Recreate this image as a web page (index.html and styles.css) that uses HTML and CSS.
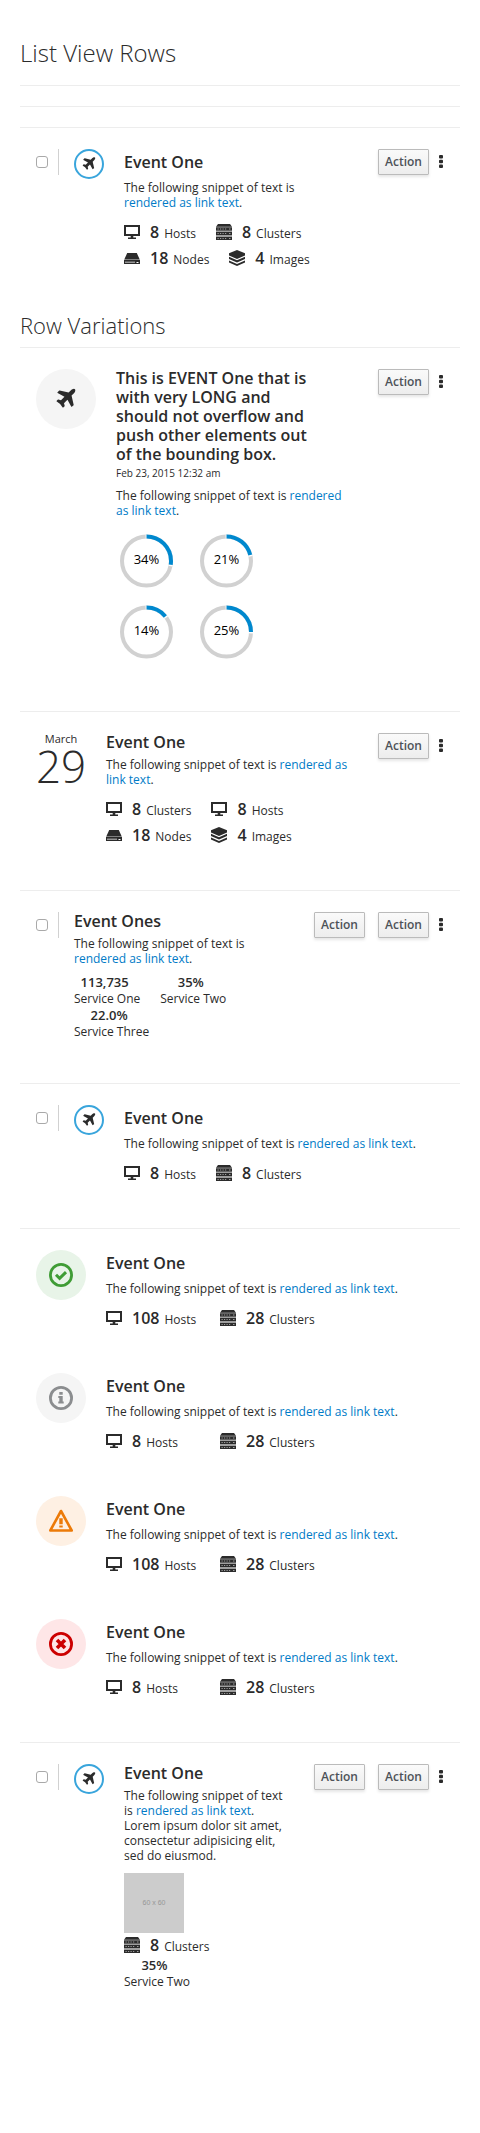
FILE: index.html
```
<!DOCTYPE html>
<html lang="en">
<head>
<meta charset="utf-8">
<title>List View Rows</title>
<link rel="stylesheet" href="styles.css">
</head>
<body>
<svg class="sprite" aria-hidden="true">
  <symbol id="plane" viewBox="0 0 1792 1792"><path d="M1568 160q44 52 12 148t-108 172l-161 161 160 696q5 19-12 33l-128 96q-7 6-19 6-4 0-7-1-15-3-21-16l-279-508-259 259 53 194q5 17-8 31l-96 96q-9 9-23 9h-2q-15-2-24-13l-189-252-252-189q-11-7-13-23-1-13 9-25l96-97q9-9 23-9 6 0 8 1l194 53 259-259-508-279q-14-8-17-24-2-16 9-27l128-128q14-13 30-8l665 159 160-160q76-76 172-108t148 12z"/></symbol>
  <symbol id="screen" viewBox="0 0 16 16"><path fill-rule="evenodd" d="M0 1h16v11H0zM2 3v7h12V3z"/><path d="M6.700 12h2.600v1.600H12V15H4v-1.400h2.700z"/></symbol>
  <symbol id="cluster" viewBox="0 0 16 16"><path d="M2 0h12l2 2.700H0z"/><path opacity=".45" d="M0 2.700h16V16H0z"/><path fill-rule="evenodd" d="M0 3.500h16v3H0zM1.500 4.500v1h1.200v-1zM4 4.500v1h1.200v-1zM6.500 4.500v1h1.200v-1zM9 4.500v1h1.200v-1zM13 4.500v1h1.500v-1zM0 8h16v3H0zM1.500 9v1h1.200V9zM4 9v1h1.200V9zM6.500 9v1h1.200V9zM9 9v1h1.200V9zM13 9v1h1.500V9zM0 13h16v3H0zM1.500 14v1h1.200v-1zM4 14v1h1.200v-1zM6.500 14v1h1.200v-1zM9 14v1h1.200v-1zM13 14v1h1.500v-1z"/></symbol>
  <symbol id="node" viewBox="0 0 16 16"><path d="M3.200 3h9.600L15.500 9H.5z"/><path fill-rule="evenodd" d="M0 10h16v4H0zM1.500 11.500v1.500h1v-1.500zM3.500 11.500v1.500h1v-1.500zM5.500 11.500v1.500h1v-1.500zM7.500 11.500v1.500h1v-1.500zM9.500 11.500v1.500h1v-1.500zM12.500 12v1h2v-1z"/><path opacity=".6" d="M.3 9h15.400v1H.3z"/></symbol>
  <symbol id="image" viewBox="0 0 16 16"><path d="M8 0l8 3.300v2.200L8 9 0 5.500V3.300z"/><path d="M0 6.700l8 3.500 8-3.500v2.200l-8 3.600-8-3.600zM0 10.400L8 14l8-3.600v2.200L8 16l-8-3.400z"/></symbol>
  <symbol id="ok" viewBox="0 0 24 24"><circle cx="12" cy="12" r="10.600" fill="none" stroke="currentColor" stroke-width="2.800"/><path d="M7 11.700l3.600 3.600 6.400-6.200" fill="none" stroke="currentColor" stroke-width="3"/></symbol>
  <symbol id="info" viewBox="0 0 24 24"><circle cx="12" cy="12" r="10.600" fill="none" stroke="currentColor" stroke-width="2.800"/><path d="M10.300 6h3.400v2.700h-3.400zM9.300 10h4.400v5.600h1V17.500H9.300v-1.900h1v-3.700h-1z"/></symbol>
  <symbol id="warning" viewBox="0 0 24 24"><path d="M12 2L22.700 21.500H1.300z" fill="none" stroke="currentColor" stroke-width="2.600" stroke-linejoin="round"/><path d="M10.300 9.300h3.400v6h-3.400zM10.300 16.600h3.400v2h-3.400z"/></symbol>
  <symbol id="error" viewBox="0 0 24 24"><circle cx="12" cy="12" r="10.600" fill="none" stroke="currentColor" stroke-width="2.800"/><path d="M8 8l8 8M16 8l-8 8" fill="none" stroke="currentColor" stroke-width="3.600"/></symbol>
  <symbol id="kebab" viewBox="0 0 4 13"><rect width="4" height="3.600" rx="1"/><rect y="4.700" width="4" height="3.600" rx="1"/><rect y="9.400" width="4" height="3.600" rx="1"/></symbol>
</svg>
<main class="page">
  <h1 class="heading">List View Rows</h1>
  <div class="row row-blank"></div>
  <div class="row row-blank"></div>

  <div class="row row-first">
    <div class="check"><span class="box"></span></div>
    <div class="ring"><svg><use href="#plane"/></svg></div>
    <div class="body roomy">
      <h3 class="title">Event One</h3>
      <p class="desc">The following snippet of text is <a>rendered as link text</a>.</p>
      <div class="facts">
        <div class="fact"><svg><use href="#screen"/></svg><strong>8</strong>Hosts</div>
        <div class="fact"><svg><use href="#cluster"/></svg><strong>8</strong>Clusters</div>
        <div class="fact"><svg><use href="#node"/></svg><strong>18</strong>Nodes</div>
        <div class="fact"><svg><use href="#image"/></svg><strong>4</strong>Images</div>
      </div>
    </div>
    <div class="actions"><button class="btn">Action</button><svg class="kebab"><use href="#kebab"/></svg></div>
  </div>

  <h2 class="subheading">Row Variations</h2>
  <div class="row row-long">
    <div class="disc disc-large"><svg><use href="#plane"/></svg></div>
    <div class="body">
      <h3 class="title">This is EVENT One that is with very LONG and should not overflow and push other elements out of the bounding box.</h3>
      <small class="stamp">Feb 23, 2015 12:32 am</small>
      <p class="desc">The following snippet of text is <a>rendered as link text</a>.</p>
      <div class="donuts">
        <svg class="donut" viewBox="0 0 60 60"><circle class="track" cx="30.500" cy="30" r="24.500"/><circle class="gap" pathLength="100" stroke-dasharray="29 71" cx="30.500" cy="30" r="24.500"/><circle class="arc" pathLength="100" stroke-dasharray="27.500 72.500" cx="30.500" cy="30" r="24.500"/><text x="30.500" y="33">34%</text></svg>
        <svg class="donut" viewBox="0 0 60 60"><circle class="track" cx="30.500" cy="30" r="24.500"/><circle class="gap" pathLength="100" stroke-dasharray="22.500 77.500" cx="30.500" cy="30" r="24.500"/><circle class="arc" pathLength="100" stroke-dasharray="21 79" cx="30.500" cy="30" r="24.500"/><text x="30.500" y="33">21%</text></svg>
        <svg class="donut" viewBox="0 0 60 60"><circle class="track" cx="30.500" cy="30" r="24.500"/><circle class="gap" pathLength="100" stroke-dasharray="15.500 84.500" cx="30.500" cy="30" r="24.500"/><circle class="arc" pathLength="100" stroke-dasharray="14 86" cx="30.500" cy="30" r="24.500"/><text x="30.500" y="33">14%</text></svg>
        <svg class="donut" viewBox="0 0 60 60"><circle class="track" cx="30.500" cy="30" r="24.500"/><circle class="gap" pathLength="100" stroke-dasharray="26.500 73.500" cx="30.500" cy="30" r="24.500"/><circle class="arc" pathLength="100" stroke-dasharray="25 75" cx="30.500" cy="30" r="24.500"/><text x="30.500" y="33">25%</text></svg>
      </div>
    </div>
    <div class="actions"><button class="btn">Action</button><svg class="kebab"><use href="#kebab"/></svg></div>
  </div>

  <div class="row row-date">
    <div class="date"><span class="month">March</span><span class="day">29</span></div>
    <div class="body">
      <h3 class="title">Event One</h3>
      <p class="desc">The following snippet of text is <a>rendered as link text</a>.</p>
      <div class="facts grid-facts">
        <div class="fact"><svg><use href="#screen"/></svg><strong>8</strong>Clusters</div>
        <div class="fact"><svg><use href="#screen"/></svg><strong>8</strong>Hosts</div>
        <div class="fact"><svg><use href="#node"/></svg><strong>18</strong>Nodes</div>
        <div class="fact"><svg><use href="#image"/></svg><strong>4</strong>Images</div>
      </div>
    </div>
    <div class="actions"><button class="btn">Action</button><svg class="kebab"><use href="#kebab"/></svg></div>
  </div>

  <div class="row row-services">
    <div class="check"><span class="box"></span></div>
    <div class="body">
      <h3 class="title">Event Ones</h3>
      <p class="desc">The following snippet of text is <a>rendered as link text</a>.</p>
      <div class="stats">
        <div class="stat"><strong>113,735</strong><span>Service One</span></div>
        <div class="stat"><strong>35%</strong><span>Service Two</span></div>
        <div class="stat"><strong>22.0%</strong><span>Service Three</span></div>
      </div>
    </div>
    <div class="actions"><button class="btn">Action</button><button class="btn">Action</button><svg class="kebab"><use href="#kebab"/></svg></div>
  </div>

  <div class="row row-wide">
    <div class="check"><span class="box"></span></div>
    <div class="ring"><svg><use href="#plane"/></svg></div>
    <div class="body roomy">
      <h3 class="title">Event One</h3>
      <p class="desc">The following snippet of text is <a>rendered as link text</a>.</p>
      <div class="facts">
        <div class="fact"><svg><use href="#screen"/></svg><strong>8</strong>Hosts</div>
        <div class="fact"><svg><use href="#cluster"/></svg><strong>8</strong>Clusters</div>
      </div>
    </div>
  </div>

  <div class="row row-status">
    <div class="disc ok"><svg><use href="#ok"/></svg></div>
    <div class="body roomy">
      <h3 class="title">Event One</h3>
      <p class="desc">The following snippet of text is <a>rendered as link text</a>.</p>
      <div class="facts status-facts">
        <div class="fact"><svg><use href="#screen"/></svg><strong>108</strong>Hosts</div>
        <div class="fact"><svg><use href="#cluster"/></svg><strong>28</strong>Clusters</div>
      </div>
    </div>
  </div>
  <div class="row row-status plain">
    <div class="disc info"><svg><use href="#info"/></svg></div>
    <div class="body roomy">
      <h3 class="title">Event One</h3>
      <p class="desc">The following snippet of text is <a>rendered as link text</a>.</p>
      <div class="facts status-facts">
        <div class="fact"><svg><use href="#screen"/></svg><strong>8</strong>Hosts</div>
        <div class="fact"><svg><use href="#cluster"/></svg><strong>28</strong>Clusters</div>
      </div>
    </div>
  </div>
  <div class="row row-status plain">
    <div class="disc warning"><svg><use href="#warning"/></svg></div>
    <div class="body roomy">
      <h3 class="title">Event One</h3>
      <p class="desc">The following snippet of text is <a>rendered as link text</a>.</p>
      <div class="facts status-facts">
        <div class="fact"><svg><use href="#screen"/></svg><strong>108</strong>Hosts</div>
        <div class="fact"><svg><use href="#cluster"/></svg><strong>28</strong>Clusters</div>
      </div>
    </div>
  </div>
  <div class="row row-status plain">
    <div class="disc error"><svg><use href="#error"/></svg></div>
    <div class="body roomy">
      <h3 class="title">Event One</h3>
      <p class="desc">The following snippet of text is <a>rendered as link text</a>.</p>
      <div class="facts status-facts">
        <div class="fact"><svg><use href="#screen"/></svg><strong>8</strong>Hosts</div>
        <div class="fact"><svg><use href="#cluster"/></svg><strong>28</strong>Clusters</div>
      </div>
    </div>
  </div>

  <div class="row row-last">
    <div class="check"><span class="box"></span></div>
    <div class="ring"><svg><use href="#plane"/></svg></div>
    <div class="body">
      <h3 class="title">Event One</h3>
      <p class="desc">The following snippet of text is <a>rendered as link text</a>. Lorem ipsum dolor sit amet, consectetur adipisicing elit, sed do eiusmod.</p>
      <div class="thumb">60 x 60</div>
      <div class="fact fact-tight"><svg><use href="#cluster"/></svg><strong>8</strong>Clusters</div>
      <div class="stat stat-single"><strong>35%</strong><span>Service Two</span></div>
    </div>
    <div class="actions"><button class="btn">Action</button><button class="btn">Action</button><svg class="kebab"><use href="#kebab"/></svg></div>
  </div>
</main>
</body>
</html>
```
FILE: styles.css
```
* { box-sizing: border-box; }
body {
  margin: 0;
  background: #fff;
  color: #2b2b2b;
  font: 12px/15px "Open Sans", sans-serif;
}
h1, h2, h3, p { margin: 0; }
svg { display: block; fill: currentColor; }
.sprite { position: absolute; width: 0; height: 0; }
a { color: #007bc7; }

.page { height: 2133px; padding: 0 20px; overflow: hidden; }
.heading { height: 85px; padding-top: 40px; font-size: 24px; line-height: 26px; font-weight: 300; }
.subheading { height: 42px; padding-top: 7px; font-size: 22px; line-height: 26px; font-weight: 300; }

.row {
  display: flex;
  align-items: flex-start;
  border-top: 1px solid #ededed;
  padding: 21px 16px 0;
}
.row-blank { height: 21px; padding-top: 0; }
.row-first { height: 178px; }
.row-long { height: 364px; }
.row-date { height: 179px; }
.row-services { height: 193px; }
.row-wide { height: 145px; }
.row-status { height: 123px; }
.row.plain { border-top-color: transparent; }
.row-status:has(+ .row-last) { height: 145px; }

.check {
  flex: none;
  width: 23px;
  height: 26px;
  margin-right: 15px;
  padding-top: 7px;
  border-right: 1px solid #d1d1d1;
}
.box { display: block; width: 12px; height: 12px; border: 1px solid #a9a9a9; border-radius: 3px; background: #fff; }

.ring {
  flex: none;
  display: grid;
  place-items: center;
  width: 30px;
  height: 30px;
  margin-right: 20px;
  border: 2px solid #39a5dc;
  border-radius: 50%;
}
.ring svg { width: 16px; height: 16px; }

.disc {
  flex: none;
  display: grid;
  place-items: center;
  width: 50px;
  height: 50px;
  margin-right: 20px;
  border-radius: 50%;
  background: #f5f5f5;
}
.disc svg { width: 24px; height: 24px; }
.disc-large { width: 60px; height: 60px; }
.ok { background: #e8f4e8; color: #3f9c35; }
.info { color: #8b8d8f; }
.warning { background: #fef0e3; color: #ec7a08; }
.error { background: #fee6e7; color: #c00; }

.body { flex: 1; min-width: 0; }
.title { font-size: 16px; line-height: 19px; font-weight: 600; }
.desc { margin-top: 5px; }
.roomy { padding-top: 4px; }
.roomy .desc { margin-top: 8px; }
.row-first .desc { width: 180px; }
.row-long .title { width: 200px; }
.row-services .desc { width: 180px; }
.row-last .desc { width: 166px; }
.row-wide .desc, .row-status .desc { white-space: nowrap; }
.stamp { display: block; margin-top: 3px; font-size: 10px; line-height: 12px; }
.row-long .desc { width: 236px; margin-top: 9px; }

.facts { display: flex; flex-wrap: wrap; column-gap: 20px; margin-top: 9px; }
.row-first .facts { width: 200px; }
.grid-facts { display: grid; grid-template-columns: max-content max-content; }
.status-facts { display: grid; grid-template-columns: 114px max-content; column-gap: 0; }
.fact { display: flex; align-items: baseline; height: 26px; line-height: 26px; white-space: nowrap; }
.fact svg { flex: none; align-self: center; width: 16px; height: 16px; margin-right: 10px; }
.fact strong { margin-right: 5px; font-size: 16px; font-weight: 600; }
.fact-tight { height: 24px; line-height: 24px; }

.stats { display: flex; flex-wrap: wrap; column-gap: 20px; width: 170px; margin-top: 8px; }
.stat { display: flex; flex-direction: column; align-items: center; white-space: nowrap; line-height: 16px; }
.stat strong { margin-right: 5px; font-size: 13px; line-height: 17px; font-weight: 600; }
.stat-single { width: max-content; }

.date { flex: none; width: 50px; margin-right: 20px; text-align: center; }
.month, .day { display: block; }
.month { font-size: 11px; line-height: 11px; }
.day { font-size: 44px; line-height: 44px; font-weight: 300; }

.donuts { display: grid; grid-template-columns: 60px 60px; gap: 11px 20px; margin: 13px 0 0; }
.donut { width: 60px; height: 60px; overflow: visible; }
.donut circle { fill: none; stroke-width: 4; transform: rotate(-90deg); transform-origin: 30.5px 30px; }
.track { stroke: #d1d1d1; }
.donut .gap { stroke: #fff; transform: rotate(-92deg); }
.arc { stroke: #0088ce; }
.donut text { fill: #000; font-size: 13px; text-anchor: middle; }

.actions { flex: none; display: flex; gap: 13px; margin-left: 20px; }
.btn {
  width: 51px;
  height: 26px;
  padding: 0;
  border: 1px solid #bbb;
  border-radius: 1px;
  background: linear-gradient(#fafafa, #ededed);
  box-shadow: 0 2px 3px rgba(3, 3, 3, .1);
  color: #4d5258;
  font: 600 12px/22px "Open Sans", sans-serif;
}
.kebab { flex: none; width: 4px; height: 13px; margin: 6px 1px 0 -3px; }

.thumb {
  display: grid;
  place-items: center;
  width: 60px;
  height: 60px;
  margin-top: 10px;
  background: #ccc;
  color: #969696;
  font: 7px/10px "Liberation Sans", sans-serif;
}
```
